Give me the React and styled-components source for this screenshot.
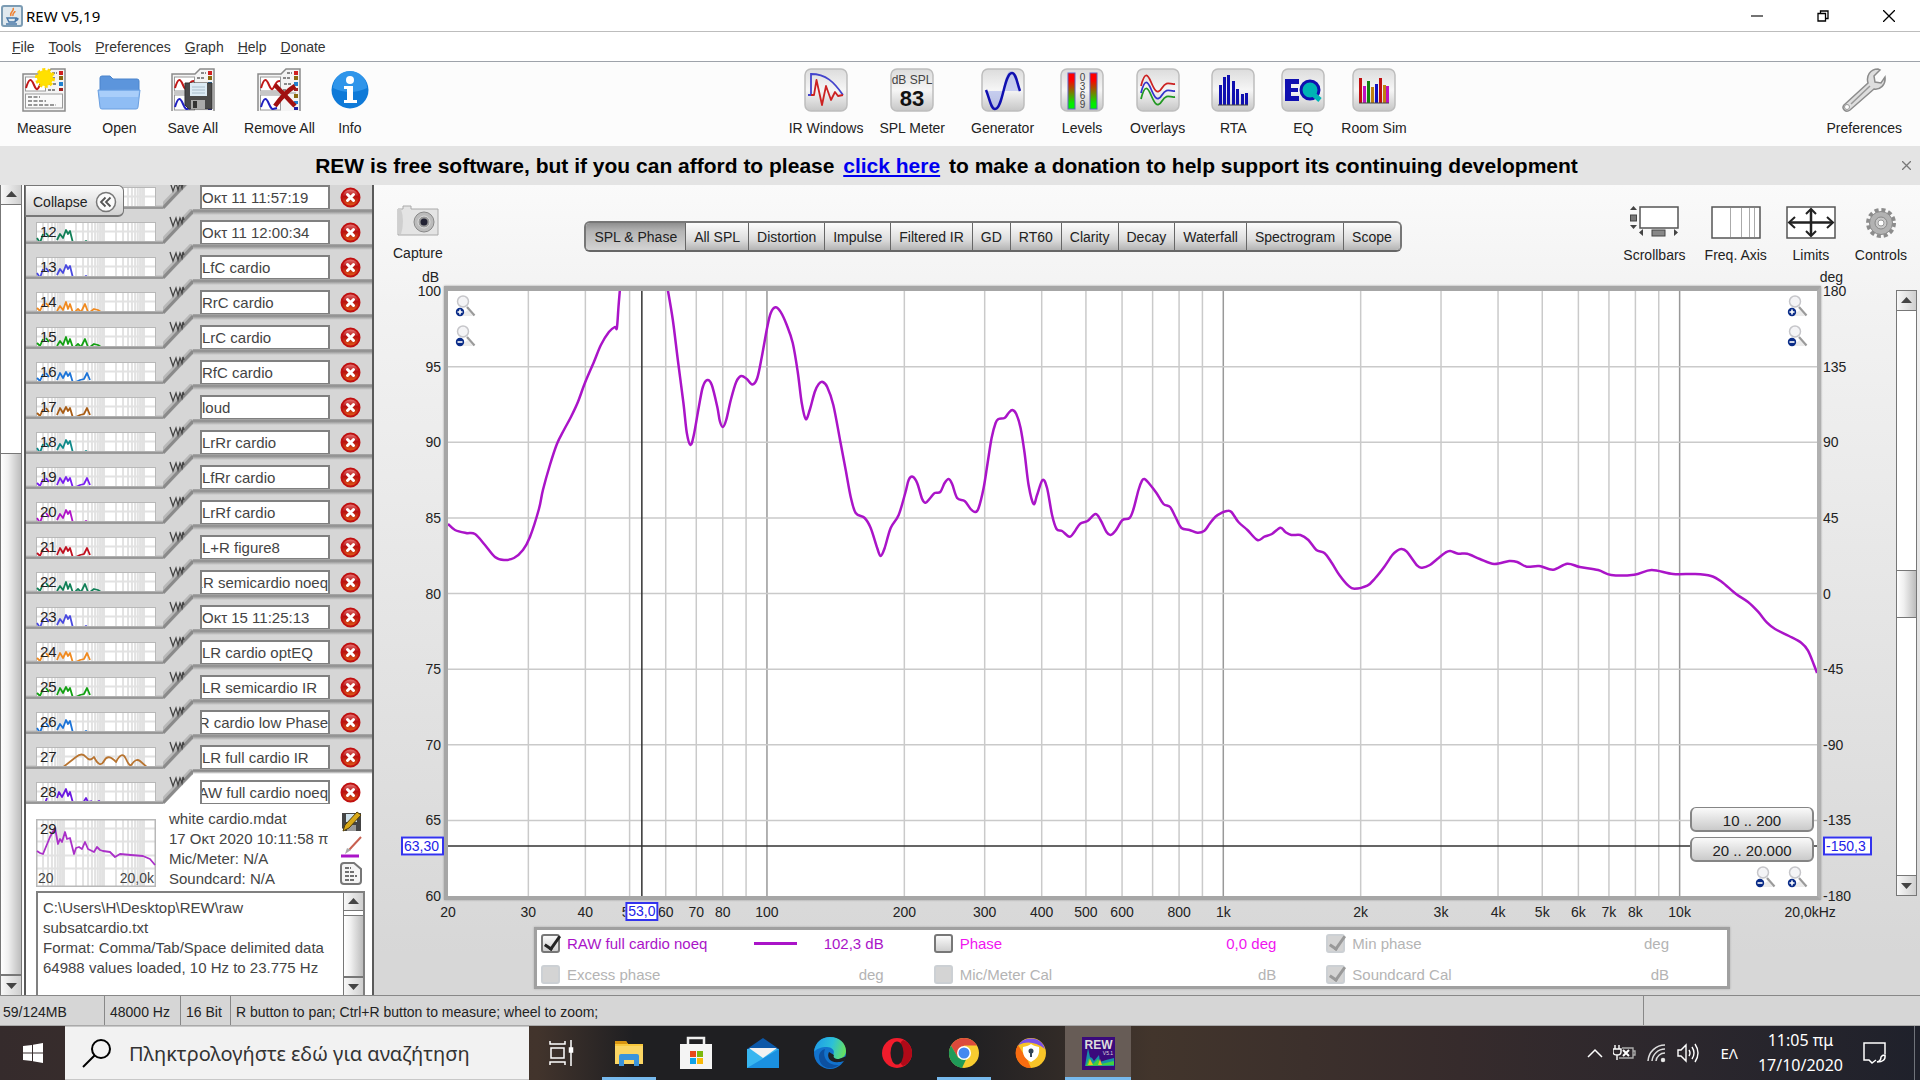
import React from "react";
import styled, { createGlobalStyle, css } from "styled-components";

const Global = createGlobalStyle`
  * { box-sizing: border-box; }
  body { margin: 0; }
  body, button, input, textarea {
    font-family: "Liberation Sans", Arial, "Noto Sans", sans-serif;
    font-size: 15px;
    color: #222;
  }
  button { padding: 0; border: 0; background: none; }
`;

const systemFont = css`font-family: "Noto Sans", "Open Sans", sans-serif;`;

/* ---------- window shell ---------- */
const Window = styled.div`
  height: 100vh;
  display: flex;
  flex-direction: column;
  overflow: hidden;
  background: #fff;
`;
const TitleBar = styled.header`
  ${systemFont}
  flex: none;
  height: 31px;
  display: flex;
  align-items: center;
  gap: 3px;
  padding-left: 1px;
  color: #000;
`;
const Title = styled.span`
  ${systemFont}
  flex: 1;
  font-size: 15px;
`;
const WinButton = styled.button`
  width: 63px;
  height: 30px;
  display: grid;
  place-items: center;
`;
const MenuBar = styled.nav`
  flex: none;
  height: 31px;
  display: flex;
  align-items: center;
  gap: 14px;
  padding: 0 12px;
  border-top: 1px solid #bdbdbd;
  border-bottom: 1px solid #9ea3aa;
`;
const MenuItem = styled.button`
  color: #333;
  font-size: 14px;
`;
const ToolBar = styled.div`
  flex: none;
  height: 84px;
  display: flex;
  justify-content: space-between;
  padding: 6px 18px 0 17px;
  background: #fcfcfc;
`;
const ToolGroup = styled.div`
  display: flex;
  align-items: flex-start;
`;
const Tool = styled.button`
  display: flex;
  flex-direction: column;
  align-items: center;
  gap: 6px;
  min-width: ${(p) => (p.$narrow ? 38 : 44)}px;
  margin-left: ${(p) => ({ none: 0, small: 16, wide: 26 })[p.$gap || "wide"]}px;
  font-size: 14px;
  line-height: 20px;
  white-space: nowrap;
`;
const Banner = styled.div`
  flex: none;
  height: 39px;
  display: flex;
  align-items: center;
  background: #e4e4e4;
`;
const BannerText = styled.p`
  flex: 1;
  margin: 0;
  text-align: center;
  font-size: 21px;
  font-weight: bold;
  color: #000;
  a { color: #0000f0; margin: 0 3px; }
`;
const BannerClose = styled.button`
  width: 27px;
  height: 24px;
  display: grid;
  place-items: center;
`;
const Body = styled.div`
  flex: 1;
  min-height: 0;
  display: flex;
`;

/* ---------- scroll bars ---------- */
const ScrollTrack = styled.div`
  flex: none;
  width: 21px;
  display: flex;
  flex-direction: column;
  background: #fff;
  border: 1px solid #777;
`;
const ScrollButton = styled.button`
  flex: none;
  height: ${(p) => (p.$compact ? 18 : 20)}px;
  display: grid;
  place-items: center;
  background: linear-gradient(90deg, #f8f8f8, #cfcfcf);
  border: 0 solid #777;
  border-width: ${(p) => (p.$end ? "1px 0 0" : "0 0 1px")};
`;
const ScrollSpace = styled.div`
  flex: ${(p) => p.$grow} 0 0;
`;
const ScrollThumb = styled.div`
  flex: ${(p) => p.$grow} 0 0;
  background: linear-gradient(90deg, #fff, #f0f0f0 35%, #bcbcbc);
  border: solid #777;
  border-width: 1px 0;
`;

/* ---------- measurement list ---------- */
const SideScroll = styled(ScrollTrack)`
  width: 22px;
  border-top: 0;
  border-bottom: 0;
`;
const SideBar = styled.aside`
  flex: none;
  width: 350px;
  margin-left: 2px;
  position: relative;
  display: flex;
  flex-direction: column;
  border: solid #5a5a5a;
  border-width: 0 2px;
  background: #fff;
`;
const Collapse = styled.button`
  position: absolute;
  top: 0;
  left: -1px;
  height: 32px;
  display: flex;
  align-items: center;
  gap: 8px;
  padding: 3px 6px 0 7px;
  font-size: 14px;
  background: linear-gradient(#fbfbfb, #d2d2d2);
  border: 1px solid #777;
  border-bottom-width: 2px;
  border-radius: 0 6px 6px 0;
`;
const List = styled.div`
  flex: 1;
  min-height: 0;
  overflow: hidden;
  display: flex;
  flex-direction: column;
  justify-content: flex-end;
  background: #d6d6d6;
`;
const Row = styled.div`
  flex: none;
  height: 35px;
  display: flex;
`;
const ThumbCell = styled.div`
  width: 137px;
  padding: 13px 7px 0 10px;
  overflow: hidden;
  background: linear-gradient(#d6d6d6 31px, #8a8a8a 34px, #aaa 35px);
`;
const FieldCell = styled.div`
  flex: 1;
  display: flex;
  align-items: flex-start;
  gap: 10px;
  padding: 11px 0 0 7px;
  height: 36px;
  background: ${(p) =>
    p.$active
      ? "linear-gradient(#aaa, #808080 2px, #fff 5px)"
      : "linear-gradient(#aaa, #8c8c8c 2px, #d6d6d6 6px)"};
`;
const NameField = styled.input`
  width: 130px;
  height: 25px;
  padding: 0;
  border: 2px solid #808080;
  background: #fff;
  color: #444;
  direction: ${(p) => (p.$clipStart ? "rtl" : "ltr")};
`;
const IconButton = styled.button`
  display: grid;
  place-items: center;
  flex: none;
`;
const RemoveButton = styled(IconButton)`
  height: 25px;
  width: 21px;
`;
const Detail = styled.div`
  flex: none;
  display: grid;
  grid-template-columns: 120px 160px 22px;
  column-gap: 12px;
  padding: 0 0 2px 10px;
`;
const BigThumb = styled.div`
  padding-top: 15px;
`;
const Facts = styled.div`
  padding: 5px 0 0 1px;
  line-height: 20px;
  height: 85px;
  color: #444;
  white-space: nowrap;
  overflow: hidden;
`;
const SideTools = styled.div`
  display: flex;
  flex-direction: column;
  gap: 4px;
  padding-top: 7px;
`;
const NotesBox = styled.div`
  flex: none;
  height: 104px;
  display: flex;
  margin: 0 7px 0 10px;
  border: 2px solid #808080;
  border-bottom: 0;
`;
const Notes = styled.textarea`
  flex: 1;
  min-width: 0;
  padding: 5px 0 0 5px;
  border: 0;
  resize: none;
  overflow: hidden;
  line-height: 20px;
  color: #444;
`;
const NotesScroll = styled(ScrollTrack)`
  border-width: 0 0 0 1px;
  width: 20px;
`;

/* ---------- graph panel ---------- */
const Panel = styled.main`
  flex: 1;
  min-width: 0;
  display: flex;
  flex-direction: column;
  background: linear-gradient(#fafafa, #f2f2f2 15%, #d7d7d7 95%);
`;
const PanelTop = styled.div`
  flex: none;
  height: 83px;
  display: flex;
  justify-content: space-between;
  align-items: flex-start;
  padding: 20px 13px 0 19px;
`;
const PanelTool = styled.button`
  display: flex;
  flex-direction: column;
  align-items: center;
  gap: 6px;
  line-height: 20px;
  font-size: 14px;
`;
const PanelTools = styled.div`
  display: flex;
  gap: 19px;
`;
const Tabs = styled.div`
  display: flex;
  height: 31px;
  margin: 16px 80px 0 0;
  border: 2px solid #777;
  border-bottom-color: #666;
  border-radius: 6px;
  overflow: hidden;
`;
const Tab = styled.button`
  padding: 0 8px;
  font-size: 14px;
  white-space: nowrap;
  border-right: 1px solid #666;
  background: ${(p) =>
    p.$on
      ? "linear-gradient(#8f8f8f, #b4b4b4 30%, #d4d4d4)"
      : "linear-gradient(#fcfcfc, #dedede 60%, #b4b4b4)"};
  &:last-child { border-right: 0; }
`;
const Units = styled.div`
  flex: none;
  height: 18px;
  display: flex;
  justify-content: space-between;
  padding: 0 77px 0 48px;
  line-height: 18px;
  font-size: 14px;
`;
const ChartGrid = styled.div`
  flex: 1;
  min-height: 0;
  display: grid;
  grid-template-columns: 70px 1fr 75px 21px;
  grid-template-rows: 1fr 27px;
  padding-right: 3px;
`;
const Plot = styled.div`
  position: relative;
  border: 4px solid #a6a6a6;
  border-right-color: #b0b0b0;
  border-top-width: 5px;
  box-shadow: 0 0 2px #999;
  background: #fff;
`;
const PlotSvg = styled.svg`
  display: block;
  position: absolute;
  inset: 0;
  width: 100%;
  height: 100%;
`;
const Axis = styled.div`
  position: relative;
  margin: 5px 0 4px;
`;
const AxisX = styled.div`
  grid-column: 2;
  position: relative;
  margin: 0 4px;
`;
const Mark = styled.span`
  position: absolute;
  line-height: 18px;
  font-size: 14px;
  white-space: nowrap;
  ${(p) => p.$side === "left" && css`right: 3px; transform: translateY(-50%);`}
  ${(p) => p.$side === "right" && css`left: 2px; transform: translateY(-50%);`}
  ${(p) => p.$side === "bottom" && css`top: 3px; transform: translateX(-50%);`}
  ${(p) =>
    p.$cursor &&
    css`
      z-index: 1;
      padding: 0 1px;
      color: #2222e8;
      background: #fff;
      border: 2px solid #3333ee;
      line-height: 15px;
      ${p.$side === "left" && css`right: 0; padding-right: 3px;`}
      ${p.$side === "right" && css`padding-right: 4px;`}
      ${p.$side === "bottom" && css`top: 2px;`}
    `}
`;
const Corner = styled.div`
  position: absolute;
  display: flex;
  flex-direction: ${(p) => (p.$row ? "row" : "column")};
  gap: ${(p) => (p.$row ? 11 : 8)}px;
  ${(p) => p.$at}
`;
const Ranges = styled.div`
  position: absolute;
  right: 3px;
  bottom: 34px;
  width: 124px;
  display: flex;
  flex-direction: column;
  gap: 5px;
`;
const RangeButton = styled.button`
  height: 25px;
  padding-top: 2px;
  border: 2px solid #858585;
  border-top-width: 1px;
  border-radius: 6px;
  background: linear-gradient(#fafafa, #cacaca);
`;
const Legend = styled.div`
  flex: none;
  display: grid;
  grid-template-columns: repeat(3, 1fr);
  grid-auto-rows: 31px;
  margin: 0 190px 6px 160px;
  padding: 1px 8px 0 4px;
  height: 62px;
  align-content: center;
  background: #fff;
  border: 3px solid #a0a0a0;
  box-shadow: 0 0 2px #aaa;
`;
const Entry = styled.label`
  display: flex;
  align-items: center;
  gap: 7px;
  padding-right: 50px;
  color: ${(p) => p.$color};
`;
const EntryName = styled.span`
  flex: 1;
`;
const EntryLine = styled.span`
  width: 43px;
  height: 3px;
  margin-right: 20px;
  background: #aa14c8;
`;
const EntryValue = styled.span`
  width: 60px;
  text-align: right;
  white-space: nowrap;
`;
const Check = styled.input`
  appearance: none;
  position: relative;
  width: 19px;
  height: 19px;
  margin: 0;
  border: 2px solid #777;
  border-radius: 3px;
  background: linear-gradient(#fafafa, #cfcfcf);
  &:checked::after {
    content: "";
    position: absolute;
    left: 5px;
    top: -3px;
    width: 6px;
    height: 14px;
    border: solid #222;
    border-width: 0 3px 3px 0;
    transform: rotate(35deg);
  }
  &:disabled { border-color: #ccd0d4; background: #d4d4d4; }
  &:disabled::after { border-color: #999; }
`;

/* ---------- status bar ---------- */
const Status = styled.footer`
  flex: none;
  height: 31px;
  display: flex;
  background: #d6d6d6;
  border-top: 1px solid #888;
  border-bottom: 1px solid #aaa;
`;
const StatusCell = styled.div`
  flex: ${(p) => (p.$grow ? "1" : "none")};
  width: ${(p) => (p.$w ? `${p.$w}px` : "auto")};
  padding-left: 5px;
  line-height: 33px;
  font-size: 14px;
  border-right: 1px solid #888;
  &:first-child { padding-left: 3px; }
  &:last-child { border: 0; }
`;

/* ---------- task bar ---------- */
const TaskBar = styled.div`
  flex: none;
  height: 54px;
  display: flex;
  background: linear-gradient(90deg, #352b2c 0, #42342c 28%, #1f1f22 33%, #1f1f22 50%, #42352c 60%, #362b2c 76%, #2b272d 88%, #1f212b);
`;
const StartButton = styled.button`
  width: 65px;
  display: grid;
  place-items: center;
`;
const SearchBox = styled.label`
  width: 464px;
  display: flex;
  align-items: center;
  gap: 17px;
  padding-left: 17px;
  background: #f2f2f2;
  border: solid #c8c8c8;
  border-width: 1px 0;
`;
const SearchInput = styled.input`
  ${systemFont}
  flex: 1;
  min-width: 0;
  padding: 0;
  border: 0;
  outline: 0;
  background: none;
  font-size: 20px;
  &::placeholder { color: #333; opacity: 1; }
`;
const Apps = styled.div`
  flex: 1;
  display: flex;
  gap: 1px;
`;
const AppButton = styled.button`
  width: 66px;
  display: grid;
  place-items: center;
  border-bottom: 3px solid transparent;
  padding-top: 3px;
  ${(p) => p.$open && css`background: linear-gradient(#76b9ed, #76b9ed) center bottom / 54px 3px no-repeat border-box;`}
  ${(p) => p.$active && css`background: #675c56; border-color: #76b9ed;`}
`;
const Tray = styled.div`
  display: flex;
  align-items: center;
  border-right: 1px solid #70737a;
  margin-right: 5px;
  padding-right: 27px;
  gap: 10px;
`;
const TrayText = styled.span`
  ${systemFont}
  color: #fff;
  font-size: ${(p) => (p.$small ? 15 : 16)}px;
  line-height: 25px;
  text-align: center;
  white-space: pre-line;
  margin: ${(p) => (p.$clock ? "0 10px" : "0 0 0 9px")};
`;

/* ---------- chart data ---------- */
const RANGE = { w: 1370, h: 605 };
const freqPos = (f) => Math.log10(f / 20) / 3;
const GRID_FREQS = [10, 100, 1000, 10000]
  .flatMap((d) => [1, 2, 3, 4, 5, 6, 7, 8, 9].map((n) => n * d))
  .filter((f) => f > 20 && f < 20000);
const LABEL_FREQS = [20, 30, 40, 50, 60, 70, 80, 100, 200, 300, 400, 500, 600, 800, 1000, 2000, 3000, 4000, 5000, 6000, 7000, 8000, 10000];
const freqLabel = (f) => (f >= 1000 ? `${f / 1000}k` : `${f}`);

const RISE = [[448,524],[455,530],[466,533],[475,534],[485,545],[495,557],[504,560],[514,558],[523,550],[530,537],[539,509],[543,490],[550,465],[557,444],[564,430],[571,417],[578,402],[585,383],[594,362],[601,345],[609,332],[615,327],[617,328],[618.6,307],[620,290]];
const FALL = [[668,290],[673,320],[678,360],[683.6,403],[687,433],[690.7,445],[694,435],[699,407],[703,387],[707.5,380],[712,385],[717.5,407],[720,421],[723,427],[726.4,420],[731,400],[736.4,382],[741.4,376],[747,379],[752.5,384.5],[757.5,378],[762,357],[767.5,327],[771,313],[775.7,307.3],[780.7,311.7],[787,325],[793,343],[798,372],[802,403],[806,419],[810,410],[815,392],[819,384],[823,382],[827.5,387],[833.6,405],[840.7,442],[846,470],[851,497],[856,513],[865,518],[871,528],[877.5,548],[881,556],[885,548],[891,528],[899,515],[905.6,493],[909,480],[913,476.7],[917.5,483],[922.5,499],[926,502.7],[930.6,498],[935,493],[940.6,492],[945,483],[949,479],[952.5,484],[957.5,498],[965,501],[971,509],[975.6,512],[979,508],[984,488],[988,463],[992,438],[996,423],[999,419],[1005,418],[1009,413],[1012.7,410],[1016.7,414],[1021,428],[1025,453],[1029,485],[1034,504],[1037.5,495],[1043,480],[1047.5,488],[1052.5,515],[1057,529],[1062.5,531],[1070,536.7],[1075,531.7],[1080.6,523.7],[1088,521],[1096,514],[1101,520],[1107,532],[1111,535],[1116,530.7],[1123,520],[1130,518],[1134,509],[1139,490],[1142.5,480.7],[1145,479],[1149,482.7],[1157,493],[1164,504],[1170.6,507],[1176,517],[1182,528],[1190,530],[1198,532.7],[1205,530.7],[1210,524],[1216,516.7],[1222.5,512.7],[1227.5,511],[1232,512],[1239,522],[1248,530],[1258,540],[1265,536.7],[1272.5,534],[1281,527.7],[1286,532],[1292,535],[1301,535],[1309,540],[1317,550],[1325,553],[1332.5,563],[1340,575],[1349,585.7],[1355,588.7],[1368,585.7],[1376,578],[1385,566.7],[1393,555],[1397.5,551],[1402,549],[1407.5,551.7],[1418,565.7],[1423,567.7],[1430.6,565],[1438,559],[1446,552.7],[1451,551],[1459,553.7],[1468,553.7],[1480.6,559],[1495,564],[1510,561],[1518,562],[1527.5,566.7],[1540,566],[1554,569.7],[1568,563.7],[1580.6,567],[1599,570],[1612,575],[1635,574.7],[1652.5,570],[1674,574],[1696,574],[1712,576],[1722.5,581.7],[1737,594],[1749,602],[1759,611.7],[1768,622.7],[1776,629],[1790,636],[1802.5,643],[1809,650.7],[1815,665],[1818,673]];

const smooth = (pts) => {
  let d = `M${pts[0]}`;
  for (let i = 0; i < pts.length - 1; i++) {
    const a = pts[i - 1] || pts[i];
    const b = pts[i];
    const c = pts[i + 1];
    const e = pts[i + 2] || c;
    d += `C${b[0] + (c[0] - a[0]) / 6} ${b[1] + (c[1] - a[1]) / 6} ${c[0] - (e[0] - b[0]) / 6} ${c[1] - (e[1] - b[1]) / 6} ${c}`;
  }
  return d;
};

/* ---------- thumbnails ---------- */
const SHORT = "M1 16l3 5 3-9M10 11l3 4M21 18l3-6 3 4 3-8 2 4 2-3 3 12M38 21h3M47 21l3-2 2 2";
const LONG = "M1 16l3 3 3-7M10 11l3 4M21 19l3-5 3 4 3-8 2 7 2-5 3 9M39 20l3-3 3 3 4-8 3 8M54 20l4-3 4 1 3 2h5";
const MID = "M1 16l3 3 3-7M10 11l3 4M21 18l3-7 3 5 3-6 2 4 2-3 3 10M40 20l4-2 4-1 3-6 3 7M60 20h4";
const ROWS = [
  [11, "Οκτ 11 11:57:19", "#d6d6d6", ""],
  [12, "Οκτ 11 12:00:34", "#128058", SHORT],
  [13, "LfC cardio", "#4a4ae0", SHORT],
  [14, "RrC cardio", "#f08a20", LONG],
  [15, "LrC cardio", "#12a012", LONG],
  [16, "RfC cardio", "#1c74d8", MID],
  [17, "loud", "#a85c14", MID],
  [18, "LrRr cardio", "#108a8a", SHORT],
  [19, "LfRr cardio", "#7a1ef0", MID],
  [20, "LrRf cardio", "#b014c8", SHORT],
  [21, "L+R figure8", "#c01020", MID],
  [22, "LR semicardio noeq", "#128058", LONG],
  [23, "Οκτ 15 11:25:13", "#4a4ae0", SHORT],
  [24, "LR cardio optEQ", "#f08a20", MID],
  [25, "LR semicardio IR", "#12a012", MID],
  [26, "LR cardio low Phase", "#1c74d8", SHORT],
  [27, "LR full cardio IR", "#b87430", "M26 21L40 10q6-5 10 0t8 0q6 12 10 4t12 1q6-12 10-3t6 5q4-6 8-3l8 7"],
  [28, "RAW full cardio noeq", "#6a18e0", "M9 21l2-5M21 16l2-6 3 5 4-8 2 7 2-4 3 11M47 21l3-5 2 4 4-1M60 21l3-2 2 2M74 21h4"],
];
const CLIPPED = [22, 26, 28];

function Thumb({ n, h, color, d, axis }) {
  return (
    <svg width="120" height={h} viewBox={`0 0 120 ${h}`} style={{ display: "block" }}>
      <rect x="0.5" y="0.5" width="119" height={h} fill="#fff" />
      {GRID_FREQS.map((f) => (
        <path key={f} d={`M${freqPos(f) * 120} 1v${h}`} stroke="#e2e2e2" strokeWidth="2" />
      ))}
      <path d={`M0 9.500h120M0 22.500h120${axis ? "M0 36.500h120M0 49.500h120" : ""}`} stroke="#e2e2e2" strokeWidth="2" />
      <rect x="0.5" y="0.5" width="119" height={axis ? h - 1 : h + 4} fill="none" stroke="#b8b8b8" strokeWidth={axis ? 2 : 1} />
      <path d={d} fill="none" stroke={color} strokeWidth="1.800" strokeLinejoin="round" />
      <text x="4" y="15" fontSize="15" fill="#222">{n}</text>
      {axis && (
        <>
          <text x="2" y="64" fontSize="14" fill="#444">20</text>
          <text x="118" y="64" fontSize="14" fill="#444" textAnchor="end">20,0k</text>
        </>
      )}
    </svg>
  );
}

function TabEdge({ active }) {
  return (
    <svg width="30" height="35" viewBox="0 0 30 35" style={{ display: "block", flex: "none" }}>
      <rect width="30" height="35" fill="#d6d6d6" />
      {active && <path d="M0 35L30 3V35z" fill="#fff" />}
      <path d="M0 32L30 1" stroke="#b8b8b8" strokeWidth="6" />
      <path d="M0 34L30 2" stroke="#8a8a8a" strokeWidth="3" />
      <path d="M7 8l3 9 3-8 2 7 2-7 2 5 1-6 1 3" fill="none" stroke="#444" strokeWidth="1.300" />
    </svg>
  );
}

const Arrow = ({ up }) => (
  <svg width="11" height="7" viewBox="0 0 11 7"><path d={up ? "M0 6L5.500 0 11 6z" : "M0 1L5.500 7 11 1z"} fill="#444" /></svg>
);

const RemoveIcon = () => (
  <svg width="21" height="21" viewBox="0 0 21 21">
    <defs>
      <linearGradient id="rm" x1="0" y1="0" x2="0" y2="1">
        <stop offset="0" stopColor="#e88080" /><stop offset="0.450" stopColor="#b81010" /><stop offset="1" stopColor="#e06018" />
      </linearGradient>
    </defs>
    <circle cx="10.500" cy="10.500" r="9" fill="url(#rm)" stroke="#c01010" strokeWidth="2" />
    <path d="M7.500 7.500l6 6M13.500 7.500l-6 6" stroke="#fff" strokeWidth="3" strokeLinecap="round" />
  </svg>
);

const ZoomIcon = ({ plus }) => (
  <svg width="21" height="22" viewBox="0 0 21 22">
    <path d="M4 21h14l-5-6z" fill="#000" opacity="0.080" />
    <circle cx="8" cy="6.500" r="5.500" fill="#f4f4f6" stroke="#c6c6ca" strokeWidth="1.500" />
    <path d="M12 12l7.500 8.500" stroke="#9a9a9a" strokeWidth="2.200" />
    <circle cx="5" cy="17" r="4.200" fill="#0a2c88" />
    <path d={plus ? "M2.500 17h5M5 14.500v5" : "M2.500 17h5"} stroke="#fff" strokeWidth="1.600" />
  </svg>
);

/* ---------- toolbar icons ---------- */
const Sheet = ({ kind }) => (
  <svg width="44" height="44" viewBox="0 0 44 44">
    <path d={kind === "new" ? "M1 6h23l5-5h14v42H1z" : "M1 43V6h23l5-5h14v42"} fill="#f4f4f4" stroke="#8a8a8a" strokeWidth="1.500" />
    <rect x="3.500" y="9" width="20" height="14" fill="#fff" stroke="#999" />
    <path d="M4 20c3-10 5-10 8-3s4 4 6 0 3-4 5-4" fill="none" stroke="#c01818" strokeWidth="2" />
    <path d="M30 5h5M26 10h8M27 16h8M26 22h7" stroke="#666" strokeWidth="1.500" strokeDasharray="3 1" />
    <rect x="37" y="3" width="4" height="4" fill="#d02020" /><rect x="37" y="8" width="4" height="4" fill="#8a6a10" />
    <rect x="37" y="14" width="4" height="4" fill="#2080d0" /><rect x="37" y="20" width="4" height="3" fill="#a02020" />
    {kind === "new" ? (
      <>
        <rect x="3.500" y="26" width="37" height="14" fill="#fafafa" stroke="#999" />
        <path d="M6 29h12M6 33h18M6 37h28" stroke="#777" strokeWidth="1.300" strokeDasharray="4 1.500" />
        <circle cx="23" cy="10" r="8" fill="#ffe000" />
        <circle cx="23" cy="10" r="8.500" fill="none" stroke="#ffd800" strokeWidth="3" strokeDasharray="3 2.300" />
      </>
    ) : (
      <>
        <path d="M3 25h36" stroke="#999" />
        <rect x="3.500" y="27" width="20" height="15" fill="#fff" stroke="#999" />
        <path d="M4 39c3-10 5-10 8-3s4 5 8 4" fill="none" stroke="#2020c0" strokeWidth="2" />
        <rect x="37" y="26" width="4" height="4" fill="#8a6a10" /><rect x="37" y="33" width="4" height="3" fill="#2080d0" /><rect x="37" y="39" width="4" height="3" fill="#2020a0" />
      </>
    )}
    {kind === "save" && (
      <>
        <path d="M14 15h27v26H18l-4-4z" fill="#4a4a4a" stroke="#333" />
        <rect x="19" y="15" width="17" height="13" fill="#dcebf5" />
        <path d="M21 19h13M21 22h13M21 25h13" stroke="#a8bccb" />
        <rect x="20" y="32" width="14" height="9" fill="#aaa" /><rect x="22" y="33" width="4" height="7" fill="#333" />
      </>
    )}
    {kind === "remove" && <path d="M18 17c6 6 13 14 20 21M38 18c-8 5-15 13-20 20" stroke="#a01010" strokeWidth="4.500" fill="none" />}
  </svg>
);
const OpenIcon = () => (
  <svg width="44" height="44" viewBox="0 0 44 44">
    <path d="M3 22V10q0-2 2-2h8l3 3h24q2 0 2 2v10z" fill="#5c95dc" stroke="#4a84cc" />
    <path d="M1 22h42l-2 17q0 2-2 2H5q-2 0-2-2z" fill="#8fbdf4" stroke="#6a9fe0" />
    <path d="M2 23h40l-1 6H3z" fill="#a9cefa" />
  </svg>
);
const InfoIcon = () => (
  <svg width="38" height="44" viewBox="0 0 38 44">
    <circle cx="19" cy="22" r="18.500" fill="#0f7ad8" />
    <path d="M2 20a17 17 0 0134 0q-17 8-34 0z" fill="#2f95ea" />
    <circle cx="19" cy="12" r="4" fill="#fff" />
    <path d="M13 18h9v14h4v3H13v-3h3V21h-3z" fill="#fff" />
  </svg>
);
const Tile = ({ children }) => (
  <svg width="44" height="44" viewBox="0 0 44 44">
    <defs>
      <linearGradient id="tile" x1="0" y1="0" x2="0" y2="1">
        <stop offset="0" stopColor="#dcdcdc" /><stop offset="0.500" stopColor="#f6f6f6" /><stop offset="1" stopColor="#c6c6c6" />
      </linearGradient>
    </defs>
    <rect x="1" y="1" width="42" height="42" rx="6" fill="url(#tile)" stroke="#bdbdbd" strokeWidth="1.500" />
    {children}
  </svg>
);
const IrIcon = () => (
  <Tile>
    <path d="M4 27h3V6c15 0 23 8 32 21" fill="none" stroke="#4444cc" strokeWidth="1.800" />
    <path d="M7 27h3L12.500 12 18 37 22 18 27 32 31 24 34 28 39 27" fill="none" stroke="#cc2222" strokeWidth="1.800" strokeLinejoin="round" />
  </Tile>
);
const MeterIcon = () => (
  <Tile>
    <text x="22" y="16" fontSize="12" textAnchor="middle" fill="#444">dB SPL</text>
    <text x="22" y="38" fontSize="22" fontWeight="bold" textAnchor="middle" fill="#111">83</text>
  </Tile>
);
const GeneratorIcon = () => (
  <Tile>
    <path d="M6 23c5 23 13 23 16 0s10-30 17 0z" fill="#a8b4ec" opacity="0.600" />
    <path d="M5 22c4 10 5 19 9 19 8 0 9-36 17-36 4 0 5 10 8 18" fill="none" stroke="#1010b0" strokeWidth="2.500" />
  </Tile>
);
const LevelsIcon = () => (
  <Tile>
    <defs>
      <linearGradient id="lv" x1="0" y1="0" x2="0" y2="1">
        <stop offset="0.200" stopColor="#f00" /><stop offset="0.850" stopColor="#0e0" />
      </linearGradient>
    </defs>
    <rect x="8" y="5" width="7" height="36" fill="url(#lv)" stroke="#6060c0" /><rect x="30" y="5" width="7" height="36" fill="url(#lv)" stroke="#6060c0" />
    {["0", "3", "6", "9"].map((t, i) => <text key={t} x="22.500" y={13 + i * 9} fontSize="10" textAnchor="middle" fill="#444">{t}</text>)}
  </Tile>
);
const OverlaysIcon = () => (
  <Tile>
    {[["#cc2222", 0], ["#3333cc", 7], ["#229922", 13]].map(([c, y]) => (
      <path key={c} d={`M5 ${18 + y}C9 ${2 + y} 12 ${7 + y} 15 ${14 + y}S21 ${28 + y} 26 ${20 + y}s8-3 13-4`} fill="none" stroke={c} strokeWidth="1.800" />
    ))}
  </Tile>
);
const Bars = ({ bars, base }) => (
  <Tile>
    {bars.map(([x, y, c]) => <rect key={x} x={x} y={y} width="3" height={base - y} fill={c} />)}
    <path d={`M7 ${base}h30`} stroke="#444" strokeWidth="1" />
  </Tile>
);
const RtaIcon = () => (
  <Bars base={37} bars={[[8, 17], [12, 9], [16, 7], [21, 13], [25, 21], [30, 26], [34, 25]].map(([x, y]) => [x, y, "#1010b0"])} />
);
const RoomIcon = () => (
  <Bars base={35} bars={[[7, 10, "#c01010"], [11, 18, "#c010c0"], [15, 13, "#108010"], [19, 19, "#c08010"], [23, 16, "#1010c0"], [27, 10, "#c01010"], [31, 17, "#c08010"], [34, 18, "#c010c0"]]} />
);
const EqIcon = () => (
  <Tile>
    <path d="M4 11h14v5h-8v4h7v4h-7v4h8v5H4z" fill="#1010b0" />
    <circle cx="29" cy="22" r="9" fill="#00b4b4" stroke="#1010b0" strokeWidth="3" />
    <path d="M32 26l7 6" stroke="#00b4b4" strokeWidth="5" />
  </Tile>
);
const WrenchIcon = () => (
  <svg width="46" height="44" viewBox="0 0 46 44">
    <path d="M3 37L27 15C25 8 29 1 37 1l2 1-6 6 1 6 6 1 4-6c1 8-5 13-11 12L9 42c-4 3-9-1-6-5z" fill="#dedede" stroke="#8c8c8c" strokeWidth="1.500" />
    <path d="M10 36L29 18" stroke="#999" strokeWidth="1.500" />
    <circle cx="6" cy="39" r="2.500" fill="#fff" stroke="#999" />
  </svg>
);

/* ---------- graph panel icons ---------- */
const CameraIcon = () => (
  <svg width="42" height="32" viewBox="0 0 42 32">
    <path d="M1 4h5V1h8v3h27v26H1z" fill="#e4e4e4" stroke="#aaa" />
    <path d="M1 29V4h3q4 12 0 25z" fill="#cfcfcf" />
    <circle cx="27" cy="17" r="10" fill="#bbb" stroke="#888" />
    <circle cx="27" cy="17" r="6" fill="#999" stroke="#ddd" />
    <circle cx="27" cy="17" r="3.500" fill="#223" />
  </svg>
);
const ScrollbarsIcon = () => (
  <svg width="50" height="34" viewBox="0 0 50 34">
    <rect x="11" y="2" width="38" height="21" fill="#fff" stroke="#555" strokeWidth="1.500" />
    <path d="M1 5l3.500-4L8 5zM1 20l3.500 4L8 20zM14 24v7l-4-3.500zM45 24v7l4-3.500z" fill="#444" />
    <rect x="1.500" y="10" width="6" height="6" fill="#777" stroke="#444" /><rect x="23" y="25" width="13" height="6" fill="#888" stroke="#444" />
  </svg>
);
const FreqIcon = () => (
  <svg width="50" height="34" viewBox="0 0 50 34">
    <rect x="1" y="2" width="48" height="31" fill="#fff" stroke="#555" strokeWidth="1.500" />
    <path d="M19.500 3v29M30.500 3v29M38.500 3v29M43.500 3v29" stroke="#aaa" />
  </svg>
);
const LimitsIcon = () => (
  <svg width="50" height="34" viewBox="0 0 50 34">
    <rect x="1" y="2" width="48" height="31" fill="#fff" stroke="#555" strokeWidth="1.500" />
    <path d="M4 17.500h42M25 5v25" stroke="#222" strokeWidth="2.500" />
    <path d="M9 12l-6 5.500L9 23M41 12l6 5.500L41 23M20 9l5-5 5 5M20 26l5 5 5-5" fill="none" stroke="#222" strokeWidth="2" />
  </svg>
);
const GearIcon = () => (
  <svg width="34" height="34" viewBox="0 0 34 34">
    <circle cx="17" cy="18" r="13" fill="none" stroke="#8c8c8c" strokeWidth="4" strokeDasharray="4 2.807" />
    <circle cx="17" cy="18" r="11.500" fill="#b2b2b2" stroke="#8a8a8a" />
    <circle cx="17" cy="18" r="6" fill="#c8c8c8" stroke="#888" />
    <circle cx="17" cy="18" r="3" fill="#fff" stroke="#999" />
  </svg>
);

/* ---------- task bar icons ---------- */
const TaskViewIcon = () => (
  <svg width="26" height="28" viewBox="0 0 26 28" fill="none" stroke="#fff" strokeWidth="1.500">
    <path d="M1 2v3h15V2M1 26v-3h15v3M2 9h13v10H2zM22 1v26" /><rect x="20.500" y="9" width="3" height="4" fill="#fff" />
  </svg>
);
const ExplorerIcon = () => (
  <svg width="30" height="28" viewBox="0 0 30 28">
    <path d="M1 2h11l2 3h15v20H1z" fill="#f9c83c" /><path d="M1 2h11l2 3H1z" fill="#d99510" /><path d="M1 7h28v18H1z" fill="#fbd664" />
    <path d="M5 27V17q0-2 2-2h16q2 0 2 2v10h-5v-6h-10v6z" fill="#3b94dc" />
  </svg>
);
const StoreIcon = () => (
  <svg width="34" height="34" viewBox="0 0 34 34">
    <path d="M9 10V2h16v8" fill="none" stroke="#eee" strokeWidth="2.500" /><path d="M1 8h32v25H1z" fill="#f4f4f4" />
    <path d="M11 15h6v6h-6z" fill="#e8491c" /><path d="M18 15h6v6h-6z" fill="#7cb80c" /><path d="M11 22h6v6h-6z" fill="#10a2e8" /><path d="M18 22h6v6h-6z" fill="#f8b808" />
  </svg>
);
const MailIcon = () => (
  <svg width="34" height="32" viewBox="0 0 34 32">
    <path d="M1 12L17 1l16 11z" fill="#0c58a8" /><path d="M1 12h32v19H1z" fill="#38b6f0" /><path d="M1 31l32-19v19z" fill="#1a90e0" />
    <path d="M3 11h28L17 21z" fill="#f2f2f2" />
  </svg>
);
const EdgeIcon = () => (
  <svg width="34" height="34" viewBox="0 0 34 34">
    <defs>
      <linearGradient id="ed" x1="0" y1="0.300" x2="1" y2="0.500"><stop offset="0" stopColor="#1e9be8" /><stop offset="0.550" stopColor="#2cc0d8" /><stop offset="1" stopColor="#66e060" /></linearGradient>
    </defs>
    <circle cx="17" cy="17" r="16" fill="#1272cc" />
    <path d="M1 16C2 6 9 1 17 1c9 0 16 6 16 14 0 6-5 8-9 8-5 0-5-2-4-4 3-5-2-8-6-8C8 11 3 13 1 16z" fill="url(#ed)" />
    <path d="M12 13c-3 8 2 17 14 16-8 6-19 3-20-7-.5-4 2-8 6-9z" fill="#0c50a0" />
    <path d="M16 16c-3 6 2 13 15 9l3-5-8 3c-5 0-6-2-5-4z" fill="#1f1f22" />
  </svg>
);
const OperaIcon = () => (
  <svg width="32" height="32" viewBox="0 0 32 32">
    <ellipse cx="16" cy="16" rx="15" ry="15" fill="#f01c2c" /><path d="M22 3c12 5 12 21 0 26-6-4-6-22 0-26z" fill="#b00a18" /><ellipse cx="16" cy="16" rx="6.500" ry="11.500" fill="#1f1f22" />
  </svg>
);
const ChromeIcon = () => (
  <svg width="32" height="32" viewBox="0 0 32 32">
    <circle cx="16" cy="16" r="15" fill="#f8cc30" />
    <path d="M3 8.500A15 15 0 0129 8.500H16L9.500 20z" fill="#dc4a3c" /><path d="M3 8.500l7 12 8 2-4 8.500A15 15 0 013 8.500z" fill="#1f9a58" />
    <circle cx="16" cy="16" r="7" fill="#fff" /><circle cx="16" cy="16" r="5.500" fill="#4488f0" />
  </svg>
);
const ShieldIcon = () => (
  <svg width="32" height="32" viewBox="0 0 32 32">
    <circle cx="16" cy="16" r="15" fill="#f8c428" /><path d="M16 31A15 15 0 013 8l10 16z" fill="#f86c10" /><path d="M3 8.500A15 15 0 0130 12C20 4 10 4 3 8.500z" fill="#7a50e8" />
    <path d="M16 7c3 2 5 2 8 3 1 8-2 12-8 15-6-3-9-7-8-15 3-1 5-1 8-3z" fill="#fff" /><circle cx="16" cy="14" r="2.500" fill="#345" /><path d="M15 15h2v5h-2z" fill="#345" />
  </svg>
);
const RewIcon = () => (
  <svg width="33" height="33" viewBox="0 0 33 33">
    <rect width="33" height="33" fill="#3a0a7c" />
    <path d="M3 29L6 11l2 9 2 1 2 3 5-6 1 7 6-2 8-2v8z" fill="#1890a8" /><path d="M4 29l3-8 4 6 5-5 3 5 13-3v4z" fill="#40d040" /><path d="M6 28l2-6 3 6zM16 28l2-6 2 6z" fill="#f0c020" />
    <text x="16.500" y="12" fontSize="12" fontWeight="bold" textAnchor="middle" fill="#ddd">REW</text><text x="26" y="18" fontSize="5" textAnchor="middle" fill="#ddd">V5.1</text>
  </svg>
);

const LEFT_TOOLS = [
  ["Measure", <Sheet kind="new" />, "none"],
  ["Open", <OpenIcon />],
  ["Save All", <Sheet kind="save" />],
  ["Remove All", <Sheet kind="remove" />],
  ["Info", <InfoIcon />, "small"],
];
const MID_TOOLS = [
  ["IR Windows", <IrIcon />, "none"],
  ["SPL Meter", <MeterIcon />, "small"],
  ["Generator", <GeneratorIcon />],
  ["Levels", <LevelsIcon />],
  ["Overlays", <OverlaysIcon />],
  ["RTA", <RtaIcon />],
  ["EQ", <EqIcon />],
  ["Room Sim", <RoomIcon />, "small"],
];
const TABS = ["SPL & Phase", "All SPL", "Distortion", "Impulse", "Filtered IR", "GD", "RT60", "Clarity", "Decay", "Waterfall", "Spectrogram", "Scope"];
const APPS = [
  ["Task View", <TaskViewIcon />], ["File Explorer", <ExplorerIcon />, "open"], ["Store", <StoreIcon />], ["Mail", <MailIcon />],
  ["Edge", <EdgeIcon />], ["Opera", <OperaIcon />], ["Chrome", <ChromeIcon />, "open"], ["Secure Browser", <ShieldIcon />], ["REW", <RewIcon />, "active"],
];
const LEGEND = [
  ["RAW full cardio noeq", "102,3 dB", "#aa14c8", true, true],
  ["Phase", "0,0 deg", "#f014f0", false, true],
  ["Min phase", "deg", "#b4b4b4", true, false],
  ["Excess phase", "deg", "#b4b4b4", false, false],
  ["Mic/Meter Cal", "dB", "#b4b4b4", false, false],
  ["Soundcard Cal", "dB", "#b4b4b4", true, false],
];
const NOTES = "C:\\Users\\H\\Desktop\\REW\\raw\nsubsatcardio.txt\nFormat: Comma/Tab/Space delimited data\n64988 values loaded, 10 Hz to 23.775 Hz";
const CURSOR = { x: 194 / 1370, y: 555 / 605 };

const renderTools = (tools) =>
  tools.map(([name, icon, gap]) => (
    <Tool key={name} $gap={gap} $narrow={name === "Info"}>{icon}<span>{name}</span></Tool>
  ));

function Chart() {
  const line = { vectorEffect: "non-scaling-stroke", fill: "none" };
  return (
    <ChartGrid>
      <Axis>
        {[100, 95, 90, 85, 80, 75, 70, 65, 60].map((v, i) => (
          <Mark key={v} $side="left" style={{ top: `${i * 12.5}%` }}>{v}</Mark>
        ))}
        <Mark $side="left" $cursor style={{ top: `${CURSOR.y * 100}%` }}>63,30</Mark>
      </Axis>
      <Plot>
        <PlotSvg viewBox={`0 0 ${RANGE.w} ${RANGE.h}`} preserveAspectRatio="none">
          {GRID_FREQS.map((f) => (
            <path key={f} {...line} d={`M${freqPos(f) * RANGE.w} 0V${RANGE.h}`} stroke={[100, 1000, 10000].includes(f) ? "#999" : "#cacaca"} strokeWidth={1.5} />
          ))}
          {[1, 2, 3, 4, 5, 6, 7].map((i) => (
            <path key={i} {...line} d={`M0 ${(i * RANGE.h) / 8}H${RANGE.w}`} stroke="#cacaca" strokeWidth={1.5} />
          ))}
          <g transform="translate(-448 -291)">
            <path {...line} d={smooth(RISE)} stroke="#aa14c8" strokeWidth={2.5} />
            <path {...line} d={smooth(FALL)} stroke="#aa14c8" strokeWidth={2.5} />
          </g>
          <path {...line} d={`M${CURSOR.x * RANGE.w} 0V${RANGE.h}M0 ${CURSOR.y * RANGE.h}H${RANGE.w}`} stroke="#333" strokeWidth={1.5} />
        </PlotSvg>
        <Corner $at="top: 4px; left: 7px;">
          <IconButton aria-label="Zoom in level"><ZoomIcon plus /></IconButton>
          <IconButton aria-label="Zoom out level"><ZoomIcon /></IconButton>
        </Corner>
        <Corner $at="top: 4px; right: 9px;">
          <IconButton aria-label="Zoom in phase"><ZoomIcon plus /></IconButton>
          <IconButton aria-label="Zoom out phase"><ZoomIcon /></IconButton>
        </Corner>
        <Ranges>
          <RangeButton>10 .. 200</RangeButton>
          <RangeButton>20 .. 20.000</RangeButton>
        </Ranges>
        <Corner $row $at="bottom: 8px; right: 9px;">
          <IconButton aria-label="Zoom out frequency"><ZoomIcon /></IconButton>
          <IconButton aria-label="Zoom in frequency"><ZoomIcon plus /></IconButton>
        </Corner>
      </Plot>
      <Axis>
        {[180, 135, 90, 45, 0, -45, -90, -135, -180].map((v, i) => (
          <Mark key={v} $side="right" style={{ top: `${i * 12.5}%` }}>{v}</Mark>
        ))}
        <Mark $side="right" $cursor style={{ top: `${CURSOR.y * 100}%` }}>-150,3</Mark>
      </Axis>
      <GraphScroll>
        <ScrollButton aria-label="Scroll up"><Arrow up /></ScrollButton>
        <ScrollSpace $grow={260} />
        <ScrollThumb $grow={46} />
        <ScrollSpace $grow={258} />
        <ScrollButton $end aria-label="Scroll down"><Arrow /></ScrollButton>
      </GraphScroll>
      <AxisX>
        {LABEL_FREQS.map((f) => (
          <Mark key={f} $side="bottom" style={{ left: `${freqPos(f) * 100}%` }}>{freqLabel(f)}</Mark>
        ))}
        <Mark $side="bottom" style={{ left: "99.5%" }}>20,0kHz</Mark>
        <Mark $side="bottom" $cursor style={{ left: `${CURSOR.x * 100}%` }}>53,0</Mark>
      </AxisX>
    </ChartGrid>
  );
}
const GraphScroll = styled(ScrollTrack)`
  margin: 4px 0;
`;

export default function App() {
  return (
    <Window>
      <Global />
      <TitleBar>
        <svg width="22" height="22" viewBox="0 0 22 22">
          <rect x="1" y="1" width="20" height="20" rx="2" fill="#dfe8ee" stroke="#7c9cb4" strokeWidth="2" />
          <path d="M12 3c2 3-4 4-2 8M14 6c0 2-3 2-2 5" fill="none" stroke="#f08030" strokeWidth="1.500" />
          <path d="M6 13h9l-1 4H8zM15 13q4 0 0 3M5 19h11" fill="none" stroke="#4a78a8" strokeWidth="1.500" />
        </svg>
        <Title>REW V5,19</Title>
        <WinButton aria-label="Minimize"><svg width="12" height="12"><path d="M0 6h12" stroke="#444" strokeWidth="1.500" /></svg></WinButton>
        <WinButton aria-label="Restore"><svg width="12" height="12" fill="none" stroke="#000" strokeWidth="1.300"><path d="M1 3.500h7.500v7.500H1zM3.500 3V1H11v7.500H9" /></svg></WinButton>
        <WinButton aria-label="Close"><svg width="12" height="12"><path d="M0 0l12 12M12 0L0 12" stroke="#000" strokeWidth="1.300" /></svg></WinButton>
      </TitleBar>
      <MenuBar>
        {["File", "Tools", "Preferences", "Graph", "Help", "Donate"].map((m) => (
          <MenuItem key={m}><u>{m[0]}</u>{m.slice(1)}</MenuItem>
        ))}
      </MenuBar>
      <ToolBar>
        <ToolGroup>{renderTools(LEFT_TOOLS)}</ToolGroup>
        <ToolGroup>{renderTools(MID_TOOLS)}</ToolGroup>
        <ToolGroup>{renderTools([["Preferences", <WrenchIcon />, "none"]])}</ToolGroup>
      </ToolBar>
      <Banner>
        <BannerText>
          REW is free software, but if you can afford to please <a href="#donate">click here</a> to make a donation to help support its continuing development
        </BannerText>
        <BannerClose aria-label="Dismiss"><svg width="9" height="9"><path d="M0 0l9 9M9 0L0 9" stroke="#777" strokeWidth="1.300" /></svg></BannerClose>
      </Banner>
      <Body>
        <SideScroll>
          <ScrollButton aria-label="Scroll up"><Arrow up /></ScrollButton>
          <ScrollSpace $grow={248} />
          <ScrollThumb $grow={520} />
          <ScrollButton $end aria-label="Scroll down"><Arrow /></ScrollButton>
        </SideScroll>
        <SideBar>
          <List>
            {ROWS.map(([n, name, color, d]) => (
              <Row key={n}>
                <ThumbCell><Thumb n={n} h={19} color={color} d={d} /></ThumbCell>
                <TabEdge active={n === 28} />
                <FieldCell $active={n === 28}>
                  <NameField aria-label={`Measurement ${n}`} defaultValue={name} $clipStart={CLIPPED.includes(n)} />
                  <RemoveButton aria-label={`Remove ${n}`}><RemoveIcon /></RemoveButton>
                </FieldCell>
              </Row>
            ))}
          </List>
          <Collapse>
            Collapse
            <svg width="22" height="22" viewBox="0 0 22 22"><circle cx="11" cy="11" r="9.500" fill="#fafafa" stroke="#777" strokeWidth="1.500" /><path d="M10.500 6.500l-4.500 4.500 4.500 4.500M15.500 6.500l-4.500 4.500 4.500 4.500" fill="none" stroke="#555" strokeWidth="1.800" /></svg>
          </Collapse>
          <Detail>
            <BigThumb>
              <Thumb n={29} h={68} color="#aa30c8" axis d="M1 32L4 34 7 35 14 18 19 9 22 25 24 20 26 23 29 13 31 20 34 19 38 35 40 29 43 28 46 30 49 23 52 30 56 32 58 33 61 28 64 31 67 32 74 33 79 38 84 35 95 36 107 37 114 40 119 46" />
            </BigThumb>
            <Facts>white cardio.mdat<br />17 Οκτ 2020 10:11:58 πμ<br />Mic/Meter: N/A<br />Soundcard: N/A</Facts>
            <SideTools>
              <IconButton aria-label="Save"><svg width="21" height="21"><path d="M1 2h19v18H4l-3-3z" fill="#444" /><path d="M5 3h11v8H5z" fill="#cfe2ec" /><path d="M6 14h9v6H6z" fill="#999" /><path d="M2 20l2-6L16 1l4 3L8 17z" fill="#d8a818" stroke="#544008" /></svg></IconButton>
              <IconButton aria-label="Trace colour"><svg width="21" height="22"><path d="M8 14L20 1" stroke="#c86050" strokeWidth="2" /><path d="M4 18l2-6 4 2z" fill="#a8a8a8" /><path d="M0 20h18" stroke="#aa14c8" strokeWidth="3" /></svg></IconButton>
              <IconButton aria-label="Notes"><svg width="22" height="23" fill="none" stroke="#777" strokeWidth="2"><path d="M4 1h10l7 6v12q0 3-3 3H4q-3 0-3-3V4q0-3 3-3z" fill="#f4f4f4" /><path d="M5 6h6M5 10h9M5 14h12M5 18h10" stroke="#444" strokeWidth="1.500" strokeDasharray="4 1" /></svg></IconButton>
            </SideTools>
          </Detail>
          <NotesBox>
            <Notes aria-label="Notes" defaultValue={NOTES} />
            <NotesScroll>
              <ScrollButton $compact aria-label="Scroll up"><Arrow up /></ScrollButton>
              <ScrollSpace $grow={4} />
              <ScrollThumb $grow={60} />
              <ScrollButton $compact $end aria-label="Scroll down"><Arrow /></ScrollButton>
            </NotesScroll>
          </NotesBox>
        </SideBar>
        <Panel>
          <PanelTop>
            <PanelTool><CameraIcon /><span>Capture</span></PanelTool>
            <Tabs>{TABS.map((t, i) => <Tab key={t} $on={i === 0}>{t}</Tab>)}</Tabs>
            <PanelTools>
              <PanelTool><ScrollbarsIcon /><span>Scrollbars</span></PanelTool>
              <PanelTool><FreqIcon /><span>Freq. Axis</span></PanelTool>
              <PanelTool><LimitsIcon /><span>Limits</span></PanelTool>
              <PanelTool><GearIcon /><span>Controls</span></PanelTool>
            </PanelTools>
          </PanelTop>
          <Units><span>dB</span><span>deg</span></Units>
          <Chart />
          <Legend>
            {LEGEND.map(([name, value, color, on, enabled], i) => (
              <Entry key={name} $color={color}>
                <Check type="checkbox" defaultChecked={on} disabled={!enabled} />
                <EntryName>{name}</EntryName>
                {i === 0 && <EntryLine />}
                <EntryValue>{value}</EntryValue>
              </Entry>
            ))}
          </Legend>
        </Panel>
      </Body>
      <Status>
        <StatusCell $w={105}>59/124MB</StatusCell>
        <StatusCell $w={76}>48000 Hz</StatusCell>
        <StatusCell $w={50}>16 Bit</StatusCell>
        <StatusCell $grow>R button to pan; Ctrl+R button to measure; wheel to zoom;</StatusCell>
        <StatusCell $w={276} />
      </Status>
      <TaskBar>
        <StartButton aria-label="Start"><svg width="20" height="20"><path d="M0 3l9-1v7.500H0zM10 1.800L20 0v9.500H10zM0 10.500h9V18l-9-1zM10 10.500h10V20l-10-1.800z" fill="#fff" /></svg></StartButton>
        <SearchBox>
          <svg width="30" height="30" fill="none" stroke="#000" strokeWidth="2"><circle cx="19" cy="11" r="9" /><path d="M12.500 17.500L1 29" /></svg>
          <SearchInput aria-label="Search" placeholder="Πληκτρολογήστε εδώ για αναζήτηση" />
        </SearchBox>
        <Apps>
          {APPS.map(([name, icon, state]) => (
            <AppButton key={name} aria-label={name} $open={state === "open"} $active={state === "active"}>{icon}</AppButton>
          ))}
        </Apps>
        <Tray>
          <svg width="16" height="10"><path d="M1 9l7-7 7 7" fill="none" stroke="#fff" strokeWidth="1.500" /></svg>
          <svg width="24" height="18" fill="none" stroke="#fff" strokeWidth="1.400"><path d="M2 1v4M6 1v4M0 5h8v3q0 3-4 3t-4-3zM4 11v5" /><path d="M9 4h11v10H6M20 7h2v4h-2" stroke="#aaa" /><path d="M10 6l6 6M16 6l-6 6" strokeWidth="2" /></svg>
          <svg width="20" height="20" fill="none" stroke="#ddd" strokeWidth="1.500"><path d="M1 18A17 17 0 0118 2M5 18A13 13 0 0118 6M9 18a9 9 0 019-8" /><circle cx="16" cy="17" r="1.500" fill="#fff" /></svg>
          <svg width="24" height="20" fill="none" stroke="#fff" strokeWidth="1.400"><path d="M1 7h3l5-5v16l-5-5H1zM12 7q2 3 0 6M15 4q4 6 0 12M18 1q6 9 0 18" /></svg>
          <TrayText $small>ΕΛ</TrayText>
          <TrayText $clock>{"11:05 πμ\n17/10/2020"}</TrayText>
          <svg width="24" height="24" fill="none" stroke="#fff" strokeWidth="1.500"><path d="M13 19l-4 3-3-3H1V2h21v11" /><path d="M22 14q1 7-8 7 4-1 4-5 1-2 4-2z" /></svg>
        </Tray>
      </TaskBar>
    </Window>
  );
}
